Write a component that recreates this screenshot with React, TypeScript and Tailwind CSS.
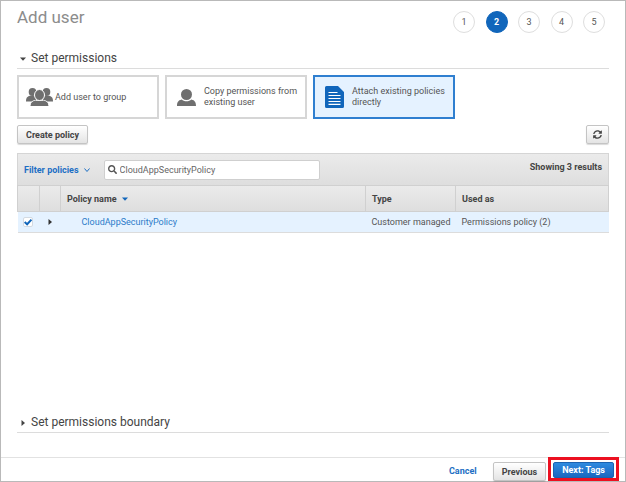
import { useState } from "react";
import { FaSearch, FaSyncAlt } from "react-icons/fa";
import clsx from "clsx";

const STEPS = [1, 2, 3, 4, 5];
const CURRENT_STEP = 2;

const POLICIES = [
  {
    name: "CloudAppSecurityPolicy",
    type: "Customer managed",
    usedAs: "Permissions policy (2)",
  },
];

const BUTTON =
  "rounded-[2px] border border-[#c4c4c4] bg-linear-to-b from-white to-[#e4e4e4] text-[9px] leading-3 font-bold text-[#444] shadow-[0_1px_1px_rgba(0,0,0,0.15)]";

function GroupIcon() {
  return (
    <svg viewBox="0 0 27 18" className="w-[27px] h-[18px] shrink-0" fill="#6f6f6f">
      <ellipse cx="6.5" cy="4" rx="3.8" ry="4" />
      <ellipse cx="20.5" cy="4" rx="3.8" ry="4" />
      <path d="M0 13.5c0-3.500 1-5 4-5.700h6v5.700z" />
      <path d="M27 13.5c0-3.500-1-5-4-5.700h-6v5.700z" />
      <g stroke="#fff" strokeWidth="1">
        <path d="M4.200 18.500c0-3.500 1.400-5.500 5.400-6.200h7.800c4 .7 5.400 2.700 5.400 6.200z" />
        <ellipse cx="13.5" cy="7" rx="5" ry="5.5" />
      </g>
      <path d="M4.800 18c0-3 1.300-4.400 4.800-5.200 1 .6 2.300 1 3.900 1s2.900-.4 3.900-1c3.500.8 4.800 2.200 4.800 5.200z" />
    </svg>
  );
}

function UserIcon() {
  return (
    <svg viewBox="0 0 19 17" className="w-[19px] h-[17px] shrink-0" fill="#6f6f6f">
      <ellipse cx="9.5" cy="5.5" rx="5.5" ry="5.5" />
      <path d="M0 17c0-3.800 1.200-5.600 4.600-6.500 1.300 1.200 2.900 1.800 4.900 1.800s3.600-.6 4.900-1.800c3.400.9 4.600 2.700 4.600 6.500z" />
    </svg>
  );
}

function DocumentIcon() {
  return (
    <svg viewBox="0 0 19 22" className="w-[19px] h-[22px] shrink-0">
      <path d="M1.500 0H13l6 6v14.500a1.500 1.500 0 0 1-1.500 1.500h-16A1.500 1.500 0 0 1 0 20.500v-19A1.500 1.500 0 0 1 1.500 0z" fill="#1166bb" />
      <path d="M3.500 6.500h9M3.500 9.500h12M3.500 12.500h12M3.500 15.500h12M3.500 18.300h12" stroke="#fff" strokeWidth="1.2" />
    </svg>
  );
}

function Caret({ open, className }: { open?: boolean; className?: string }) {
  return (
    <svg viewBox="0 0 6 6" className={clsx("size-[6px] shrink-0", className)} fill="currentColor">
      <path d={open ? "M0 1.500h6L3 4.800z" : "M1.500 0v6L5 3z"} />
    </svg>
  );
}

const OPTIONS = [
  { id: "group", label: "Add user to group", icon: <GroupIcon />, style: "pl-[7px] gap-[2px]" },
  { id: "copy", label: "Copy permissions from existing user", icon: <UserIcon />, style: "pl-[10px] gap-2" },
  { id: "attach", label: "Attach existing policies directly", icon: <DocumentIcon />, style: "pl-[10px] gap-2" },
];

export default function App() {
  const [selected, setSelected] = useState("attach");
  const [query, setQuery] = useState("CloudAppSecurityPolicy");
  const [checked, setChecked] = useState(true);

  return (
    <div className="min-h-screen flex flex-col border border-[#b9b9b9] bg-white font-[Roboto,sans-serif] text-[9px] leading-3 text-[#555]">
      <header className="flex justify-between items-start pl-4 pr-5 pt-1">
        <h1 className="text-[17px] leading-6 text-[#8c8c8c]">Add user</h1>
        <ol className="flex justify-between w-[152px] mt-[6px]">
          {STEPS.map((step) => (
            <li
              key={step}
              className={clsx(
                "size-[22px] rounded-full border flex items-center justify-center",
                step === CURRENT_STEP
                  ? "border-[#1166bb] bg-[#1166bb] text-white font-bold"
                  : "border-[#dedede]"
              )}
            >
              {step}
            </li>
          ))}
        </ol>
      </header>

      <main className="flex-1 flex flex-col px-4">
        <h2 className="mt-4 border-b border-[#dcdcdc]">
          <button className="flex items-center gap-[5px] pl-[3px] text-[12px] leading-[19px] text-[#444]">
            <Caret open />
            Set permissions
          </button>
        </h2>

        <div className="flex gap-[6px] mt-[6px]">
          {OPTIONS.map((option) => (
            <button
              key={option.id}
              onClick={() => setSelected(option.id)}
              className={clsx(
                "w-[142px] h-11 flex items-center text-left leading-[11px] pr-1",
                option.style,
                selected === option.id
                  ? "border-2 border-[#2f7fd0] bg-[#e5f2ff]"
                  : "border-2 border-[#d6d6d6] bg-white"
              )}
            >
              {option.icon}
              {option.label}
            </button>
          ))}
        </div>

        <div className="flex justify-between mt-[6px]">
          <button className={clsx(BUTTON, "h-[19px] px-2")}>Create policy</button>
          <button aria-label="Refresh" className={clsx(BUTTON, "h-[19px] px-[6px]")}>
            <FaSyncAlt className="size-[9px]" />
          </button>
        </div>

        <section className="mt-[9px]">
          <div className="flex items-center h-8 pl-[6px] pr-[6px] border border-b-0 border-[#d5d5d5] bg-linear-to-b from-[#ebebeb] to-[#dedede]">
            <button className="flex items-center gap-[5px] font-bold text-[#1d6fc4]">
              Filter policies
              <svg viewBox="0 0 6 6" className="size-[6px]" fill="none" stroke="currentColor">
                <path d="M.5 1.500 3 4.500l2.500-3" />
              </svg>
            </button>
            <label className="flex items-center gap-[3px] w-[216px] h-5 ml-[14px] px-[3px] rounded-[2px] border border-[#cfcfcf] bg-white">
              <FaSearch className="size-[9px] shrink-0 text-[#555]" />
              <input
                aria-label="Search policies"
                className="w-full outline-none text-[#666]"
                value={query}
                onChange={(e) => setQuery(e.target.value)}
              />
            </label>
            <span className="ml-auto mb-[6px] font-bold text-[#444]">Showing 3 results</span>
          </div>

          <table className="w-full table-fixed border-collapse text-left">
            <colgroup>
              <col className="w-[22px]" />
              <col className="w-[21px]" />
              <col />
              <col className="w-[90px]" />
              <col className="w-[153px]" />
            </colgroup>
            <thead className="text-[#444]">
              <tr className="h-[26px] bg-linear-to-b from-[#ebebeb] to-[#dedede]">
                <th className="border border-[#d0d0d0]" />
                <th className="border border-[#d0d0d0]" />
                <th className="border border-[#d0d0d0] px-[6px]">
                  <button className="flex items-center gap-[5px] font-bold">
                    Policy name
                    <Caret open className="text-[#1166bb]" />
                  </button>
                </th>
                <th className="border border-[#d0d0d0] px-[6px]">Type</th>
                <th className="border border-[#d0d0d0] px-[6px]">Used as</th>
              </tr>
            </thead>
            <tbody>
              {POLICIES.map((policy) => (
                <tr key={policy.name} className="h-[21px] border-b border-[#dcdcdc] bg-[#e5f2ff]">
                  <td className="pl-[5px]">
                    <label className="relative block size-[10px]">
                      <input
                        type="checkbox"
                        aria-label={policy.name}
                        checked={checked}
                        onChange={() => setChecked(!checked)}
                        className="block size-[10px] appearance-none rounded-[2px] border border-[#d3dae2] bg-white"
                      />
                      {checked && (
                        <svg viewBox="0 0 9 9" className="absolute inset-0 size-[10px]" fill="none" stroke="#1166bb" strokeWidth="1.8">
                          <path d="M1.500 4.500 3.700 6.500 7.600 2.300" />
                        </svg>
                      )}
                    </label>
                  </td>
                  <td className="pl-[7px]">
                    <button aria-label="Expand" className="block text-[#333]">
                      <Caret />
                    </button>
                  </td>
                  <td className="pl-[21px]">
                    <a href="#" className="text-[#2c7bc9]">{policy.name}</a>
                  </td>
                  <td className="pl-[6px] whitespace-nowrap">{policy.type}</td>
                  <td className="pl-[6px] whitespace-nowrap">{policy.usedAs}</td>
                </tr>
              ))}
            </tbody>
          </table>
        </section>

        <h2 className="mt-auto mb-6 border-b border-[#dcdcdc]">
          <button className="flex items-center gap-[5px] pl-[3px] text-[12px] leading-[19px] text-[#444]">
            <Caret />
            Set permissions boundary
          </button>
        </h2>
      </main>

      <footer className="flex items-end justify-end h-6 pr-[6px] border-t border-[#e2e2e2]">
        <button className="font-bold text-[#1d6fc4] mr-4 mb-1">Cancel</button>
        <button className={clsx(BUTTON, "h-[19px] px-2 mr-[2px]")}>Previous</button>
        <div className="flex border-3 border-[#ec1020] p-[2px] pb-0 h-6">
          <button className="px-2 rounded-[2px] border border-[#1a62b0] bg-linear-to-b from-[#2d8ae0] to-[#1a68c0] font-bold text-white">
            Next: Tags
          </button>
        </div>
      </footer>
    </div>
  );
}
